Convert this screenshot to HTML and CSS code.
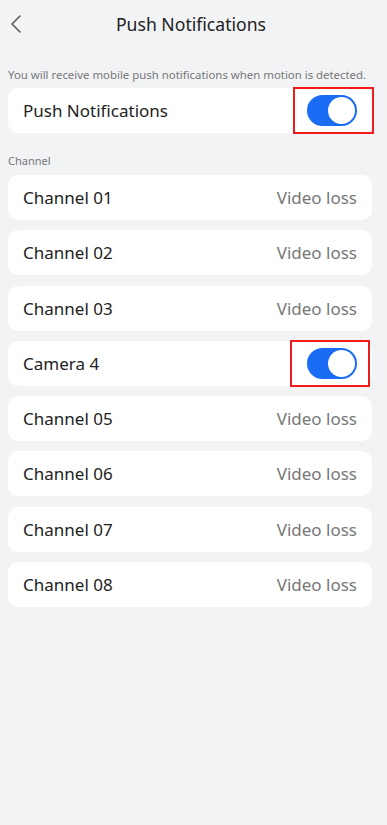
FILE: index.html
```html
<!DOCTYPE html>
<html>
<head>
<meta charset="utf-8">
<link rel="stylesheet" href="styles.css">
</head>
<body>
<div class="page">
  <header class="nav">
    <svg class="back" width="12" height="20" viewBox="0 0 12 20"><path d="M10 2 L2 10 L10 18" fill="none" stroke="#555" stroke-width="1.5" stroke-linecap="round" stroke-linejoin="round"/></svg>
    <h1 class="title">Push Notifications</h1>
  </header>
  <p class="desc">You will receive mobile push notifications when motion is detected.</p>
  <div class="card row">
    <span class="name">Push Notifications</span>
    <span class="toggle-wrap"><span class="toggle"><span class="knob"></span></span><span class="mark mark-push"></span></span>
  </div>
  <p class="section">Channel</p>
  <div class="list">
    <div class="card row"><span class="name">Channel 01</span><span class="status">Video loss</span></div>
    <div class="card row"><span class="name">Channel 02</span><span class="status">Video loss</span></div>
    <div class="card row"><span class="name">Channel 03</span><span class="status">Video loss</span></div>
    <div class="card row"><span class="name">Camera 4</span><span class="toggle-wrap"><span class="toggle"><span class="knob"></span></span><span class="mark mark-cam"></span></span></div>
    <div class="card row"><span class="name">Channel 05</span><span class="status">Video loss</span></div>
    <div class="card row"><span class="name">Channel 06</span><span class="status">Video loss</span></div>
    <div class="card row"><span class="name">Channel 07</span><span class="status">Video loss</span></div>
    <div class="card row"><span class="name">Channel 08</span><span class="status">Video loss</span></div>
  </div>
</div>
</body>
</html>
```
FILE: styles.css
```css
html, body {
  margin: 0;
  padding: 0;
  background: #f2f3f5;
}
body {
  font-family: "Noto Sans", "Open Sans", sans-serif;
  color: #222;
}
.page {
  width: 387px;
  min-height: 825px;
  padding: 0 15px 0 8px;
  box-sizing: border-box;
}
.nav {
  position: relative;
  height: 48px;
  display: flex;
  align-items: center;
  justify-content: center;
}
.back {
  position: absolute;
  left: 2px;
  top: 14px;
}
.title {
  margin: 0;
  font-size: 17.6px;
  font-weight: 400;
  color: #222;
  margin-left: 2px;
}
.desc {
  margin: 19px 0 0;
  font-size: 11.4px;
  line-height: 15px;
  color: #777;
  white-space: nowrap;
}
.card {
  background: #fff;
  border-radius: 10px;
}
.row {
  height: 45px;
  display: flex;
  align-items: center;
  justify-content: space-between;
  padding: 0 15px;
}
.desc + .row {
  margin-top: 6px;
}
.name {
  font-size: 17px;
  color: #222;
}
.status {
  font-size: 17px;
  color: #777;
}
.section {
  margin: 20px 0 0;
  font-size: 11px;
  line-height: 15px;
  color: #777;
}
.list {
  margin-top: 7px;
  display: flex;
  flex-direction: column;
  gap: 10.3px;
}
.toggle-wrap {
  position: relative;
  display: flex;
}
.toggle {
  width: 50px;
  height: 31px;
  border-radius: 16px;
  background: #1a6cf5;
  position: relative;
  display: block;
}
.knob {
  position: absolute;
  right: 2px;
  top: 2px;
  width: 27px;
  height: 27px;
  border-radius: 50%;
  background: #fff;
}
.mark {
  position: absolute;
  border: 2px solid #f01c1c;
  box-sizing: border-box;
}
.mark-push {
  left: -14px;
  right: -17px;
  top: -8px;
  bottom: -8px;
}
.mark-cam {
  left: -17px;
  right: -13px;
  top: -8px;
  bottom: -8px;
}
```
